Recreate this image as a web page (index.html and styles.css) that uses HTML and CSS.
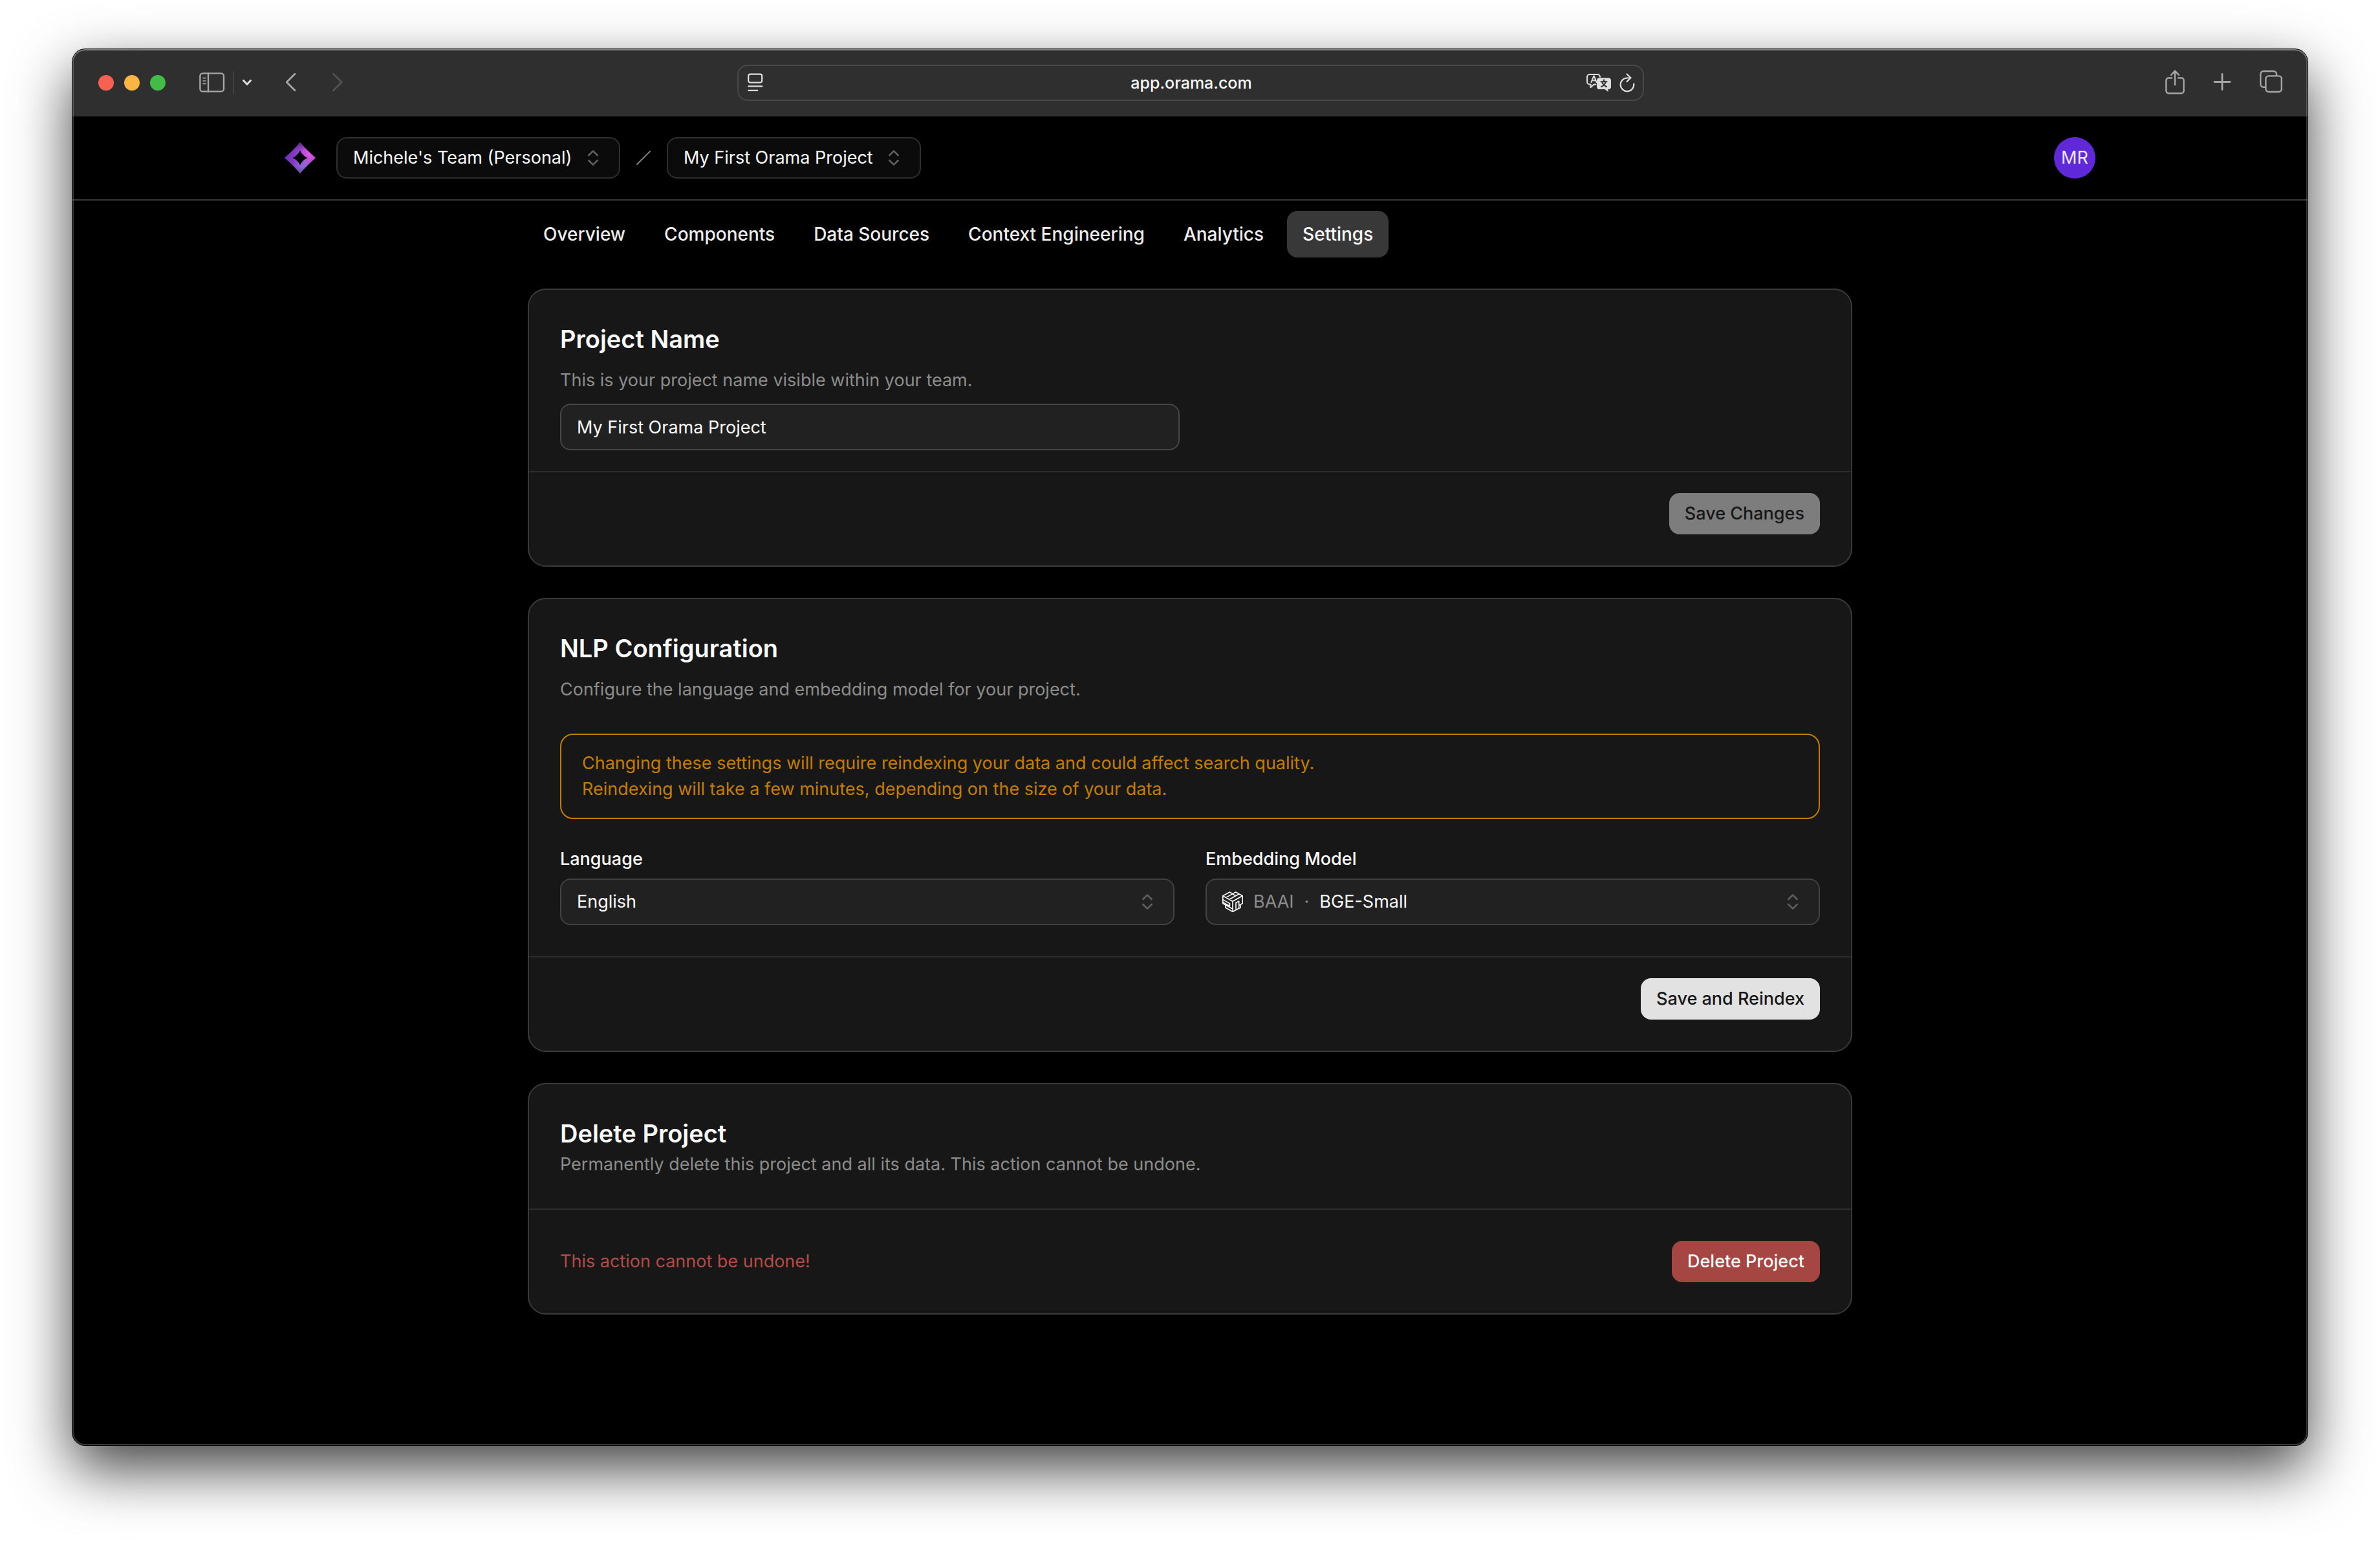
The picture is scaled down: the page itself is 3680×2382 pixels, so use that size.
FILE: index.html
```html
<!DOCTYPE html>
<html lang="en">
<head>
<meta charset="utf-8">
<meta name="viewport" content="width=device-width, initial-scale=1">
<title>Settings - My First Orama Project</title>
<link rel="stylesheet" href="styles.css">
</head>
<body>
<div class="window">
  <div class="toolbar">
    <div class="toolbar-left">
      <div class="lights">
        <button class="light light-close" aria-label="Close"></button>
        <button class="light light-min" aria-label="Minimize"></button>
        <button class="light light-max" aria-label="Zoom"></button>
      </div>
      <div class="sidebar-group">
        <button class="icon-button" aria-label="Sidebar">
          <svg width="40" height="32" viewBox="0 0 40 32" fill="none" stroke="currentColor" stroke-width="2.4" stroke-linecap="round"><rect x="1.4" y="1.4" width="36.6" height="28" rx="4"/><path d="M14 1.5v28"/><path d="M6 8.6h4M6 13h4M6 17.4h4" stroke-width="1.6"/></svg>
        </button>
        <span class="toolbar-rule"></span>
        <button class="icon-button icon-bright" aria-label="Tab groups">
          <svg width="16" height="12" viewBox="0 0 16 12" fill="none" stroke="currentColor" stroke-width="3" stroke-linecap="round" stroke-linejoin="round"><path d="M2.5 2.5 8 8.3l5.500-5.800"/></svg>
        </button>
      </div>
      <div class="history">
        <button class="icon-button" aria-label="Back">
          <svg width="16" height="32" viewBox="0 0 16 32" fill="none" stroke="currentColor" stroke-width="2.8" stroke-linecap="round" stroke-linejoin="round"><path d="M14 2.200 1.200 15 14 27.800"/></svg>
        </button>
        <button class="icon-button icon-dim" aria-label="Forward">
          <svg width="16" height="32" viewBox="0 0 16 32" fill="none" stroke="currentColor" stroke-width="2.8" stroke-linecap="round" stroke-linejoin="round"><path d="M1.500 2.200 14.300 15 1.500 27.800"/></svg>
        </button>
      </div>
    </div>
    <div class="address">
      <button class="icon-button icon-bright" aria-label="Reader">
        <svg width="24" height="32" viewBox="0 0 24 32" fill="none" stroke="currentColor" stroke-width="2.200" stroke-linecap="round"><rect x="1.200" y="2.600" width="21" height="13" rx="3"/><path d="M1.300 21.300h21M1.300 27.800h14"/></svg>
      </button>
      <input class="address-input" type="text" value="app.orama.com" aria-label="Address">
      <div class="address-tools">
        <button class="icon-button icon-bright" aria-label="Translate">
          <svg width="40" height="32" viewBox="0 0 40 32" fill="none" stroke="currentColor" stroke-width="2" stroke-linejoin="round" stroke-linecap="round"><path d="M15.500 18.500h-3L7.500 23v-4.500H6a4 4 0 0 1-4-4V7a4 4 0 0 1 4-4h12a4 4 0 0 1 4 4"/><path d="m8.500 15 3.700-9.500h.6L16.500 15M9.800 12.200h5"/><path d="M21 8.500h14a4 4 0 0 1 4 4v9.500a4 4 0 0 1-4 4h-.5v4l-5-4H21a4 4 0 0 1-4-4v-9.500a4 4 0 0 1 4-4z" fill="currentColor" stroke="none"/><path class="glyph-cut" d="M28 11.500v2.500M23.500 14.300h9M31 14.500c-1 3-3.500 6-7 7.500M25 14.500c1 3 3.500 6 7 7.500"/></svg>
        </button>
        <button class="icon-button icon-bright" aria-label="Reload">
          <svg width="24" height="32" viewBox="0 0 24 32" fill="none" stroke="currentColor" stroke-width="2.200" stroke-linecap="round" stroke-linejoin="round"><path d="M22.200 17.500a10.300 10.300 0 1 1-10.300-9h5"/><path d="m11.500 2.500 6 5.800-6 5.800"/></svg>
        </button>
      </div>
    </div>
    <div class="toolbar-right">
      <button class="icon-button" aria-label="Share">
        <svg width="30" height="40" viewBox="0 0 30 40" fill="none" stroke="currentColor" stroke-width="2.400" stroke-linecap="round" stroke-linejoin="round"><path d="M10 12.500H5a3.600 3.600 0 0 0-3.600 3.600v16.500A3.600 3.600 0 0 0 5 36.200h20a3.600 3.600 0 0 0 3.600-3.600V16.100A3.600 3.600 0 0 0 25 12.500h-5M15 23V1.800M9 7.800l6-6.100 6 6.100"/></svg>
      </button>
      <button class="icon-button" aria-label="New tab">
        <svg width="28" height="32" viewBox="0 0 28 32" fill="none" stroke="currentColor" stroke-width="2.800" stroke-linecap="round"><path d="M14 2.500v24M2 14.500h24"/></svg>
      </button>
      <button class="icon-button" aria-label="Tab overview">
        <svg width="36" height="40" viewBox="0 0 36 40" fill="none" stroke="currentColor" stroke-width="2.400"><rect x="9.400" y="9.400" width="24.400" height="24.600" rx="4.500"/><path d="M26 9V6.500A4.500 4.500 0 0 0 21.500 2H5.800a4.500 4.500 0 0 0-4.500 4.500v15.800a4.500 4.500 0 0 0 4.500 4.500H9"/></svg>
      </button>
    </div>
  </div>

  <header class="app-header">
    <div class="header-inner">
      <div class="crumbs">
        <a class="logo" href="#" aria-label="Orama">
          <svg width="48" height="48" viewBox="0 0 48 48">
            <defs>
              <linearGradient id="lg-base" x1="0" y1="0" x2="1" y2="0"><stop offset="0" stop-color="#7430c0"/><stop offset="1" stop-color="#a850cc"/></linearGradient>
              <radialGradient id="lg-pink" gradientUnits="userSpaceOnUse" cx="38" cy="18" r="18"><stop offset="0" stop-color="#e454e6"/><stop offset="1" stop-color="#e454e6" stop-opacity="0"/></radialGradient>
              <radialGradient id="lg-blue" gradientUnits="userSpaceOnUse" cx="29" cy="38" r="18"><stop offset="0" stop-color="#8c70dc"/><stop offset="1" stop-color="#8c70dc" stop-opacity="0"/></radialGradient>
              <linearGradient id="lg-shade" x1="0" y1="0" x2="0" y2="1"><stop offset="0" stop-color="#4c2060" stop-opacity=".6"/><stop offset=".25" stop-color="#4c2060" stop-opacity="0"/><stop offset=".75" stop-color="#5a5098" stop-opacity="0"/><stop offset="1" stop-color="#5a5098" stop-opacity=".8"/></linearGradient>
              <path id="lg-shape" fill-rule="evenodd" d="M24 0Q34 12 48 24 34 36 24 48 14 36 0 24 14 12 24 0ZM24 12.500Q20.500 20.500 12.500 24 20.500 27.500 24 35.500 27.500 27.500 35.500 24 27.500 20.500 24 12.500Z"/>
            </defs>
            <use href="#lg-shape" fill="url(#lg-base)"/><use href="#lg-shape" fill="url(#lg-blue)"/><use href="#lg-shape" fill="url(#lg-pink)"/><use href="#lg-shape" fill="url(#lg-shade)"/>
          </svg>
        </a>
        <div class="picker picker-small">
          <select class="picker-select" aria-label="Team"><option>Michele's Team (Personal)</option></select>
          <svg class="updown" viewBox="0 0 24 24"><path d="m7 15 5 5 5-5M7 9l5-5 5 5"/></svg>
        </div>
        <svg class="slash" width="24" height="24" viewBox="0 0 24 24" fill="none" stroke="currentColor" stroke-width="2" stroke-linecap="round"><path d="M22 2 2 22"/></svg>
        <div class="picker picker-small">
          <select class="picker-select" aria-label="Project"><option>My First Orama Project</option></select>
          <svg class="updown" viewBox="0 0 24 24"><path d="m7 15 5 5 5-5M7 9l5-5 5 5"/></svg>
        </div>
      </div>
      <button class="avatar">MR</button>
    </div>
  </header>

  <div class="content">
    <nav class="tabs">
      <a class="tab" href="#">Overview</a>
      <a class="tab" href="#">Components</a>
      <a class="tab" href="#">Data Sources</a>
      <a class="tab" href="#">Context Engineering</a>
      <a class="tab" href="#">Analytics</a>
      <a class="tab tab-active" href="#" aria-current="page">Settings</a>
    </nav>

    <main class="cards">
      <section class="card">
        <div class="card-body card-body-tight">
          <h2 class="card-title"><label for="project-name">Project Name</label></h2>
          <p class="card-text card-text-spaced">This is your project name visible within your team.</p>
          <input class="text-input" id="project-name" type="text" value="My First Orama Project">
        </div>
        <div class="card-footer">
          <button class="button button-primary" disabled>Save Changes</button>
        </div>
      </section>

      <section class="card">
        <div class="card-body">
          <h2 class="card-title">NLP Configuration</h2>
          <p class="card-text card-text-spaced">Configure the language and embedding model for your project.</p>
          <div class="notice">
            <p>Changing these settings will require reindexing your data and could affect search quality.</p>
            <p>Reindexing will take a few minutes, depending on the size of your data.</p>
          </div>
          <div class="fields">
            <div class="field">
              <label class="field-label" for="language">Language</label>
              <div class="picker">
                <select class="picker-select" id="language"><option>English</option></select>
                <svg class="updown" viewBox="0 0 24 24"><path d="m7 15 5 5 5-5M7 9l5-5 5 5"/></svg>
              </div>
            </div>
            <div class="field">
              <label class="field-label" for="model">Embedding Model</label>
              <div class="picker">
                <svg class="model-icon" viewBox="0 0 32 32" fill="none" stroke="currentColor" stroke-width="1.600" stroke-linejoin="round"><path d="M11.300 1 16 3.600 20.700 1 31.200 6.800V18.500L28 20.300V25L16 31.200 4.800 25V20.800L.8 18.500V6.800Z"/><path d="M.8 6.800 16 15.200 31.200 6.800M16 15.200V31M16 3.600 5.500 9.400M25.700 4 10.800 12.300M20.700 6.800 16 4M.8 12.600 11.500 18.600V22.500L.8 16.600M4.800 20.800 16 27M21 28.500V17.500L25.700 15V26M28 20.300 25.700 21.500"/></svg>
                <span class="vendor">BAAI</span>
                <span class="vendor">·</span>
                <select class="picker-select" id="model"><option>BGE-Small</option></select>
                <svg class="updown" viewBox="0 0 24 24"><path d="m7 15 5 5 5-5M7 9l5-5 5 5"/></svg>
              </div>
            </div>
          </div>
        </div>
        <div class="card-footer">
          <button class="button button-primary">Save and Reindex</button>
        </div>
      </section>

      <section class="card">
        <div class="card-body">
          <h2 class="card-title">Delete Project</h2>
          <p class="card-text">Permanently delete this project and all its data. This action cannot be undone.</p>
        </div>
        <div class="card-footer card-footer-tall">
          <p class="warning">This action cannot be undone!</p>
          <button class="button button-danger">Delete Project</button>
        </div>
      </section>
    </main>
  </div>
</div>
</body>
</html>
```
FILE: styles.css
```css
* {
  box-sizing: border-box;
}

body {
  margin: 0;
  padding: 76px 112px 148px;
  background: #fff;
  color: #fafafa;
  font-family: Inter, "Liberation Sans", sans-serif;
  font-size: 27px;
  line-height: 40px;
}

h2,
p {
  margin: 0;
}

button,
input,
select {
  margin: 0;
  font: inherit;
  color: inherit;
}

svg {
  display: block;
  flex: none;
}

/* Browser window */

.window {
  position: relative;
  min-height: calc(100vh - 224px);
  border-radius: 20px;
  background: #000;
  box-shadow: 0 0 0 1px #000, 0 36px 90px rgba(0, 0, 0, 0.75);
}

.window::after {
  content: "";
  position: absolute;
  inset: 0;
  border-radius: 20px;
  box-shadow: inset 0 0 0 2px rgba(255, 255, 255, 0.22), inset 0 2px 0 rgba(255, 255, 255, 0.2);
  pointer-events: none;
}

.toolbar {
  display: grid;
  grid-template-columns: 1fr minmax(0, 1402px) 1fr;
  align-items: center;
  height: 104px;
  padding: 0 38px 0 40px;
  border-radius: 20px 20px 0 0;
  background: #2f2f2f;
  color: #a6a6a6;
}

.toolbar-left,
.toolbar-right,
.lights,
.sidebar-group,
.history,
.address-tools {
  display: flex;
  align-items: center;
}

.toolbar-left {
  gap: 52px;
}

.toolbar-right {
  justify-content: flex-end;
  gap: 44px;
}

.lights {
  gap: 16px;
}

.light {
  width: 24px;
  height: 24px;
  padding: 0;
  border: 0;
  border-radius: 50%;
}

.light-close {
  background: #f66151;
}

.light-min {
  background: #fab542;
}

.light-max {
  background: #43bb49;
}

.sidebar-group {
  gap: 12px;
}

.toolbar-rule {
  width: 2px;
  height: 36px;
  background: #404040;
}

.history {
  gap: 56px;
}

.icon-button {
  padding: 0;
  border: 0;
  background: none;
}

.icon-bright {
  color: #dedede;
}

.icon-dim {
  color: #535353;
}

.glyph-cut {
  stroke: #2f2f2f;
}

.address {
  display: grid;
  grid-template-columns: 80px 1fr 80px;
  align-items: center;
  height: 56px;
  padding: 0 12px 0 14px;
  border: 2px solid #484848;
  border-radius: 16px;
}

.address-input {
  min-width: 0;
  padding: 0;
  border: 0;
  background: none;
  color: #fafafa;
  font-size: 25px;
  font-weight: 500;
  text-align: center;
}

.address-tools {
  justify-content: flex-end;
  gap: 12px;
}

/* App header */

.app-header {
  padding: 32px 48px;
  border-bottom: 2px solid #3a3a3a;
}

.header-inner {
  display: flex;
  align-items: center;
  justify-content: space-between;
  max-width: 2800px;
  margin: 0 auto;
}

.crumbs {
  display: flex;
  align-items: center;
  gap: 24px;
}

.logo {
  margin-right: 8px;
}

.slash {
  color: #808080;
}

.avatar {
  width: 64px;
  height: 64px;
  padding: 0;
  border: 0;
  border-radius: 50%;
  background: #5f28d9;
  color: #ede9fe;
}

/* Drop-downs */

.picker {
  display: flex;
  align-items: center;
  gap: 16px;
  height: 72px;
  padding: 0 24px;
  border: 2px solid #424242;
  border-radius: 16px;
  background: #212121;
}

.picker-small {
  height: 64px;
  border-color: #2f2f2f;
  background: #0b0b0b;
}

.picker-select {
  flex: 1;
  min-width: 0;
  padding: 0;
  border: 0;
  appearance: none;
  background: none;
}

.updown {
  width: 32px;
  height: 32px;
  fill: none;
  stroke: #5e5e5e;
  stroke-width: 2;
  stroke-linecap: round;
  stroke-linejoin: round;
}

.model-icon {
  width: 32px;
  height: 32px;
}

.vendor {
  color: #8c8c8c;
}

/* Page */

.content {
  max-width: 2144px;
  margin: 0 auto;
  padding: 16px 48px 96px;
}

.tabs {
  display: flex;
  gap: 12px;
  margin-bottom: 48px;
}

.tab {
  padding: 16px 24px;
  border-radius: 16px;
  color: #ededed;
  font-size: 28px;
  font-weight: 500;
  text-decoration: none;
}

.tab-active {
  background: #383838;
  color: #fafafa;
}

.cards {
  display: flex;
  flex-direction: column;
  gap: 48px;
}

.card {
  border: 2px solid #3a3a3a;
  border-radius: 28px;
  background: #171717;
}

.card-body {
  padding: 48px;
}

.card-body-tight {
  padding-bottom: 32px;
}

.card-title {
  font-size: 38px;
  font-weight: 600;
  line-height: 56px;
}

.card-text {
  color: #8c8c8c;
}

.card-text-spaced {
  margin-top: 16px;
}

.text-input {
  display: block;
  width: 100%;
  max-width: 958px;
  height: 72px;
  margin-top: 16px;
  padding: 0 24px;
  border: 2px solid #464646;
  border-radius: 16px;
  background: #212121;
}

.notice {
  margin-top: 48px;
  padding: 24px 32px;
  border: 2px solid #c47d00;
  border-radius: 20px;
  color: #c47d00;
}

.fields {
  display: grid;
  grid-template-columns: 1fr 1fr;
  gap: 48px;
  margin-top: 48px;
}

.field {
  display: flex;
  flex-direction: column;
  gap: 16px;
}

.field-label {
  font-weight: 500;
  line-height: 28px;
}

.card-footer {
  display: flex;
  align-items: center;
  justify-content: flex-end;
  padding: 32px 48px 48px;
  border-top: 2px solid #2c2c2c;
}

.card-footer-tall {
  justify-content: space-between;
  padding-top: 48px;
}

.warning {
  color: #b54a46;
}

.button {
  height: 64px;
  padding: 0 24px;
  border: 0;
  border-radius: 16px;
  font-weight: 500;
}

.button-primary {
  background: #e2e2e2;
  color: #171717;
}

.button-primary:disabled {
  background: #7d7d7d;
}

.button-danger {
  background: #a64642;
  color: #fafafa;
}
```
